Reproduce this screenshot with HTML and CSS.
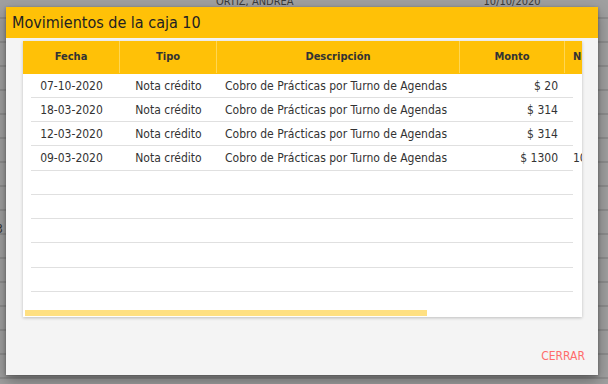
FILE: index.html
```html
<!DOCTYPE html>
<html lang="es">
<head>
<meta charset="utf-8">
<title>Movimientos de la caja 10</title>
<link rel="stylesheet" href="styles.css">
</head>
<body>
<div class="backdrop-text"><span class="bt-name">ORTIZ, ANDREA</span><span class="bt-date">10/10/2020</span></div>
<div class="side-num">3</div>
<div class="modal">
  <div class="modal-head">Movimientos de la caja 10</div>
  <div class="modal-body">
    <div class="card">
      <div class="viewport">
        <div class="row head">
          <div class="c center">Fecha</div>
          <div class="c center">Tipo</div>
          <div class="c center">Descripción</div>
          <div class="c center">Monto</div>
          <div class="c left">Nro. comprobante</div>
        </div>
        <div class="row">
          <div class="c center">07-10-2020</div>
          <div class="c center">Nota crédito</div>
          <div class="c left">Cobro de Prácticas por Turno de Agendas</div>
          <div class="c right">$ 20</div>
          <div class="c left"></div>
        </div>
        <div class="row">
          <div class="c center">18-03-2020</div>
          <div class="c center">Nota crédito</div>
          <div class="c left">Cobro de Prácticas por Turno de Agendas</div>
          <div class="c right">$ 314</div>
          <div class="c left"></div>
        </div>
        <div class="row">
          <div class="c center">12-03-2020</div>
          <div class="c center">Nota crédito</div>
          <div class="c left">Cobro de Prácticas por Turno de Agendas</div>
          <div class="c right">$ 314</div>
          <div class="c left"></div>
        </div>
        <div class="row">
          <div class="c center">09-03-2020</div>
          <div class="c center">Nota crédito</div>
          <div class="c left">Cobro de Prácticas por Turno de Agendas</div>
          <div class="c right">$ 1300</div>
          <div class="c left">1000</div>
        </div>
        <div class="row empty"></div>
        <div class="row empty"></div>
        <div class="row empty"></div>
        <div class="row empty"></div>
        <div class="row empty"></div>
      </div>
      <div class="hscroll"><div class="thumb"></div></div>
    </div>
    <div class="actions"><span class="btn-close">CERRAR</span></div>
  </div>
</div>
</body>
</html>
```

FILE: styles.css
```css
* { box-sizing: border-box; }
html, body { margin: 0; height: 100%; }
body {
  width: 608px;
  height: 384px;
  overflow: hidden;
  position: relative;
  padding: 7px 0 0 6px;
  font-family: "DejaVu Sans Condensed", "DejaVu Sans", sans-serif;
  color: #333;
  background-color: #a0a0a0;
  background-image: repeating-linear-gradient(to bottom, transparent 0, transparent 22px, #8e8e8e 22px, #8e8e8e 24px);
  background-position: 0 -5px;
}
.backdrop-text {
  position: absolute;
  top: -4px;
  left: 216px;
  font-size: 11px;
  line-height: 11px;
  color: #3a3a3a;
  display: flex;
  gap: 190px;
}
.side-num {
  position: absolute;
  left: -4px;
  top: 222px;
  font-size: 12px;
  color: #333;
}
.modal {
  position: relative;
  width: 592px;
  height: 368px;
  background: #f4f4f4;
  box-shadow: 0 6px 14px rgba(0,0,0,.35), 0 1px 3px rgba(0,0,0,.3);
  display: flex;
  flex-direction: column;
}
.modal-head {
  height: 31px;
  background: #ffc107;
  color: #222;
  font-size: 16px;
  padding: 8px 0 0 6px;
  line-height: 16px;
}
.modal-body {
  flex: 1;
  padding: 3px 16px 0 17px;
  display: flex;
  flex-direction: column;
}
.card {
  background: #fff;
  box-shadow: 0 1px 3px rgba(0,0,0,.22);
  height: 276px;
  overflow: hidden;
  display: flex;
  flex-direction: column;
}
.viewport {
  flex: 1;
  overflow: hidden;
}
.row {
  width: 559px;
  height: 24.25px;
  display: grid;
  grid-template-columns: 97px 97px 243px 105px 235px;
  align-items: center;
  font-size: 12px;
  background-image: linear-gradient(#e0e0e0, #e0e0e0);
  background-repeat: no-repeat;
  background-size: 542px 1px;
  background-position: 8px 100%;
}
.row.head {
  height: 32.5px;
  background: #ffc107;
  font-weight: bold;
  font-size: 11px;
}
.row.head .c { border-right: 1px solid #ffd653; height: 32px; line-height: 32px; }
.row .c {
  white-space: nowrap;
  overflow: hidden;
  padding: 0 8px;
}
.c.center { text-align: center; }
.c.left { text-align: left; }
.c.right { text-align: right; padding-right: 7px; }
.hscroll {
  height: 7px;
  padding: 0 0 1px 2px;
}
.thumb {
  width: 402px;
  height: 6px;
  background: #ffe082;
}
.actions {
  flex: 1;
  display: flex;
  justify-content: flex-end;
  align-items: flex-start;
  padding: 32px 0 0 0;
  margin-right: -3px;
}
.btn-close {
  color: #ff6b6b;
  font-size: 12px;
  font-weight: 500;
  font-family: "DejaVu Sans Condensed", "DejaVu Sans", sans-serif;
}
```
